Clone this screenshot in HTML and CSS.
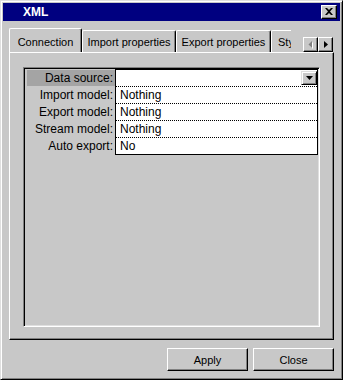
FILE: index.html
```html
<!DOCTYPE html>
<html lang="en">
<head>
    <meta charset="UTF-8">
    <title>XML</title>
    <link rel="stylesheet" href="styles.css">
</head>
<body>
    <div class="window">
        <div class="titlebar">
            <span class="title">XML</span>
            <span class="close-btn">
                <svg width="8" height="7" viewBox="0 0 8 7"><path d="M0 0h2l2 2 2-2h2L5 3.5 8 7H6L4 5 2 7H0l3-3.5z" fill="#000"/></svg>
            </span>
        </div>

        <div class="content">
            <!-- tab strip -->
            <div class="tabs-row">
                <div class="tabs">
                    <div class="tab tab-connection active">Connection</div>
                    <div class="tab tab-import">Import properties</div>
                    <div class="tab tab-export">Export properties</div>
                    <div class="tab tab-styles">Styles</div>
                </div>
                <div class="tab-scroll">
                    <span class="scroll-btn">
                        <svg width="5" height="8" viewBox="0 0 5 8"><path d="M5 1v7L1.5 4.5z" fill="#fff"/><path d="M4 0v7L0.5 3.5z" fill="#808080"/></svg>
                    </span>
                    <span class="scroll-btn">
                        <svg width="4" height="7" viewBox="0 0 4 7"><path d="M0 0v7l4-3.5z" fill="#000"/></svg>
                    </span>
                </div>
            </div>

            <div class="panel">
                <div class="frame">
                    <div class="props">
                        <div class="labels">
                            <div class="label selected">Data source:</div>
                            <div class="label">Import model:</div>
                            <div class="label">Export model:</div>
                            <div class="label">Stream model:</div>
                            <div class="label">Auto export:</div>
                        </div>
                        <div class="values">
                            <div class="value combo">
                                <span class="drop-btn">
                                    <svg width="7" height="4" viewBox="0 0 7 4"><path d="M0 0h7L3.5 4z" fill="#000"/></svg>
                                </span>
                            </div>
                            <div class="value">Nothing</div>
                            <div class="value">Nothing</div>
                            <div class="value">Nothing</div>
                            <div class="value last">No</div>
                        </div>
                    </div>
                </div>
            </div>

            <div class="buttons">
                <button class="btn">Apply</button>
                <button class="btn">Close</button>
            </div>
        </div>
    </div>
</body>
</html>
```

FILE: styles.css
```css
body {
    margin: 0;
    background: #c8c8c8;
    font-family: "Liberation Sans", Arial, sans-serif;
}
.window {
    width: 343px;
    height: 380px;
    box-sizing: border-box;
    background: #c8c8c8;
    border: 1px solid;
    border-color: #dfdfdf #000 #000 #dfdfdf;
    box-shadow: inset 1px 1px #fff, inset -1px -1px #808080;
    padding: 2px;
}
.titlebar {
    height: 18px;
    background: #000080;
    color: #fff;
    display: flex;
    justify-content: space-between;
    align-items: flex-start;
}
.title {
    font-weight: bold;
    font-size: 12px;
    line-height: 18px;
    padding-left: 20px;
}
.close-btn {
    width: 16px;
    height: 14px;
    box-sizing: border-box;
    margin: 2px 3px 0 0;
    background: #c8c8c8;
    border: 1px solid;
    border-color: #fff #000 #000 #fff;
    box-shadow: inset -1px -1px #808080;
    display: flex;
    align-items: center;
    justify-content: center;
    padding-bottom: 1px;
}
.content {
    padding: 7px 6px 0 6px;
}
.tabs-row {
    display: flex;
    height: 24px;
    font-size: 11px;
}
.tabs {
    width: 282px;
    display: flex;
    align-items: flex-end;
    overflow: hidden;
}
.tab {
    flex: none;
    height: 22px;
    box-sizing: border-box;
    padding-top: 5px;
    text-align: center;
    border: 1px solid #fff;
    border-right-color: #000;
    border-bottom: none;
    border-radius: 2px 2px 0 0;
    box-shadow: inset -1px 0 #808080;
    white-space: nowrap;
    overflow: hidden;
}
.tab-connection { width: 73px; }
.tab-import { width: 94px; }
.tab-export { width: 95px; }
.tab-styles { width: 40px; text-align: left; padding-left: 6px; }
.tab.active {
    position: relative;
    z-index: 1;
    height: 25px;
    margin-bottom: -1px;
    padding-top: 7px;
    background: #c8c8c8;
}
.tab-scroll {
    display: flex;
    align-self: flex-end;
    margin-left: auto;
    margin-right: 1px;
}
.scroll-btn {
    width: 15px;
    height: 15px;
    box-sizing: border-box;
    border: 1px solid;
    border-color: #fff #000 #000 #fff;
    box-shadow: inset -1px -1px #808080;
    display: flex;
    align-items: center;
    justify-content: center;
}
.panel {
    height: 288px;
    box-sizing: border-box;
    border: 1px solid;
    border-color: #fff #000 #000 #fff;
    box-shadow: inset -1px -1px #808080;
    padding: 14px 13px 12px 13px;
    display: flex;
    flex-direction: column;
}
.frame {
    flex: 1;
    border: 1px solid;
    border-color: #808080 #fff #fff #808080;
    box-shadow: inset 1px 1px #000, inset -1px -1px #dfdfdf;
    padding: 1px;
}
.props {
    display: flex;
    font-size: 12px;
}
.labels {
    width: 90px;
    padding-top: 1px;
}
.label {
    height: 16px;
    line-height: 16px;
    margin-bottom: 1px;
    text-align: right;
    padding-right: 2px;
    white-space: nowrap;
}
.label.selected {
    background: #a4a4a4;
    margin-left: 2px;
}
.values {
    flex: 1;
    background: #fff;
    border: 1px solid #000;
    border-bottom: none;
}
.value {
    height: 16px;
    line-height: 16px;
    padding-left: 4px;
    border-bottom: 1px dotted #000;
}
.value.last {
    border-bottom: 1px solid #000;
}
.value.combo {
    display: flex;
    justify-content: flex-end;
    padding-left: 0;
}
.drop-btn {
    width: 16px;
    height: 14px;
    margin-top: 1px;
    box-sizing: border-box;
    background: #c8c8c8;
    border: 1px solid;
    border-color: #dfdfdf #000 #000 #dfdfdf;
    box-shadow: inset 1px 1px #fff, inset -1px -1px #808080;
    display: flex;
    align-items: center;
    justify-content: center;
}
.buttons {
    display: flex;
    justify-content: flex-end;
    gap: 5px;
    margin-top: 8px;
}
.btn {
    width: 81px;
    height: 23px;
    padding: 0;
    background: #c8c8c8;
    font-family: "Liberation Sans", Arial, sans-serif;
    font-size: 11px;
    color: #000;
    border: 1px solid;
    border-color: #fff #000 #000 #fff;
    box-shadow: inset -1px -1px #808080;
    border-radius: 0;
}
```
